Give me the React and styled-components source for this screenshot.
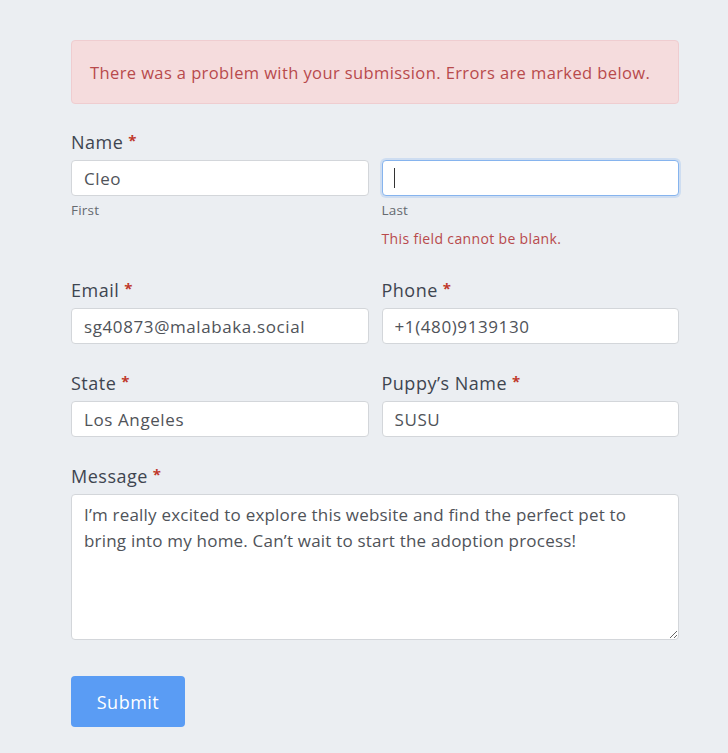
import React from "react";
import styled, { createGlobalStyle } from "styled-components";

const Global = createGlobalStyle`
  html, body { margin: 0; padding: 0; background: #ebeef2; }
  body { font-family: "Open Sans", "Noto Sans", sans-serif; }
  * { box-sizing: border-box; }
`;

const Page = styled.div`
  width: 728px;
  min-height: 753px;
  padding: 40px 49px 26px 71px;
`;

const Alert = styled.div`
  height: 64px;
  display: flex;
  align-items: center;
  padding: 0 18px;
  background: #f5dcdd;
  border: 1px solid #efcdd0;
  border-radius: 4px;
  color: #b84a4c;
  font-size: 16.5px;
  letter-spacing: 0.4px;
  margin-bottom: 25px;
`;

const Form = styled.form`
  display: flex;
  flex-direction: column;
`;

const Group = styled.div`
  margin-bottom: ${(p) => p.$mb ?? 26}px;
`;

const Row = styled.div`
  display: grid;
  grid-template-columns: 1fr 1fr;
  column-gap: 13px;
`;

const Label = styled.div`
  font-size: 18px;
  line-height: 22px;
  letter-spacing: 0.5px;
  color: #3e4550;
  margin-bottom: 7px;
`;

const Req = styled.span`
  color: #c0392b;
  font-size: 15px;
  font-weight: 700;
  margin-left: 5px;
  vertical-align: 3px;
`;

const InputWrap = styled.div`
  position: relative;
`;

const Input = styled.input`
  display: block;
  width: 100%;
  height: 36px;
  padding: 0 12px;
  border: 1px solid ${(p) => (p.$focus ? "#86b4ee" : "#d3d6da")};
  box-shadow: ${(p) => (p.$focus ? "0 0 0 2px rgba(120,170,240,0.25)" : "none")};
  border-radius: 4px;
  background: #fff;
  font-family: inherit;
  font-size: 17px;
  letter-spacing: 0.6px;
  color: #4f5359;
  outline: none;
`;

const Caret = styled.span`
  position: absolute;
  left: 12px;
  top: 8px;
  width: 1px;
  height: 20px;
  background: #333;
`;

const Sub = styled.div`
  font-size: 13.5px;
  line-height: 16px;
  letter-spacing: 0.2px;
  color: #666a70;
  margin-top: 6px;
`;

const Error = styled.div`
  font-size: 14px;
  line-height: 18px;
  letter-spacing: 0.35px;
  color: #b84a4c;
  margin-top: 12px;
`;

const TextArea = styled.textarea`
  display: block;
  width: 100%;
  height: 146px;
  padding: 7px 12px;
  border: 1px solid #d3d6da;
  border-radius: 4px;
  background: #fff;
  font-family: inherit;
  font-size: 17px;
  letter-spacing: 0.2px;
  line-height: 26px;
  color: #4f5359;
  resize: vertical;
  outline: none;
`;

const Submit = styled.button`
  width: 114px;
  height: 51px;
  margin-top: 10px;
  border: none;
  border-radius: 4px;
  background: #5a9cf4;
  color: #fff;
  font-family: inherit;
  font-size: 18px;
  letter-spacing: 0.5px;
  cursor: pointer;
`;

function Field({ label, value }) {
  return (
    <div>
      <Label>
        {label}
        <Req>*</Req>
      </Label>
      <Input readOnly value={value} />
    </div>
  );
}

export default function App() {
  return (
    <>
      <Global />
      <Page>
        <Alert>There was a problem with your submission. Errors are marked below.</Alert>
        <Form onSubmit={(e) => e.preventDefault()}>
          <Group $mb={29}>
            <Label>
              Name<Req>*</Req>
            </Label>
            <Row>
              <div>
                <Input readOnly value="Cleo" />
                <Sub>First</Sub>
              </div>
              <div>
                <InputWrap>
                  <Input readOnly value="" $focus />
                  <Caret />
                </InputWrap>
                <Sub>Last</Sub>
                <Error>This field cannot be blank.</Error>
              </div>
            </Row>
          </Group>
          <Group>
            <Row>
              <Field label="Email" value="sg40873@malabaka.social" />
              <Field label="Phone" value="+1(480)9139130" />
            </Row>
          </Group>
          <Group>
            <Row>
              <Field label="State" value="Los Angeles" />
              <Field label="Puppy’s Name" value="SUSU" />
            </Row>
          </Group>
          <Group>
            <Label>
              Message<Req>*</Req>
            </Label>
            <TextArea
              readOnly
              value="I’m really excited to explore this website and find the perfect pet to bring into my home. Can’t wait to start the adoption process!"
            />
          </Group>
          <div>
            <Submit type="submit">Submit</Submit>
          </div>
        </Form>
      </Page>
    </>
  );
}
